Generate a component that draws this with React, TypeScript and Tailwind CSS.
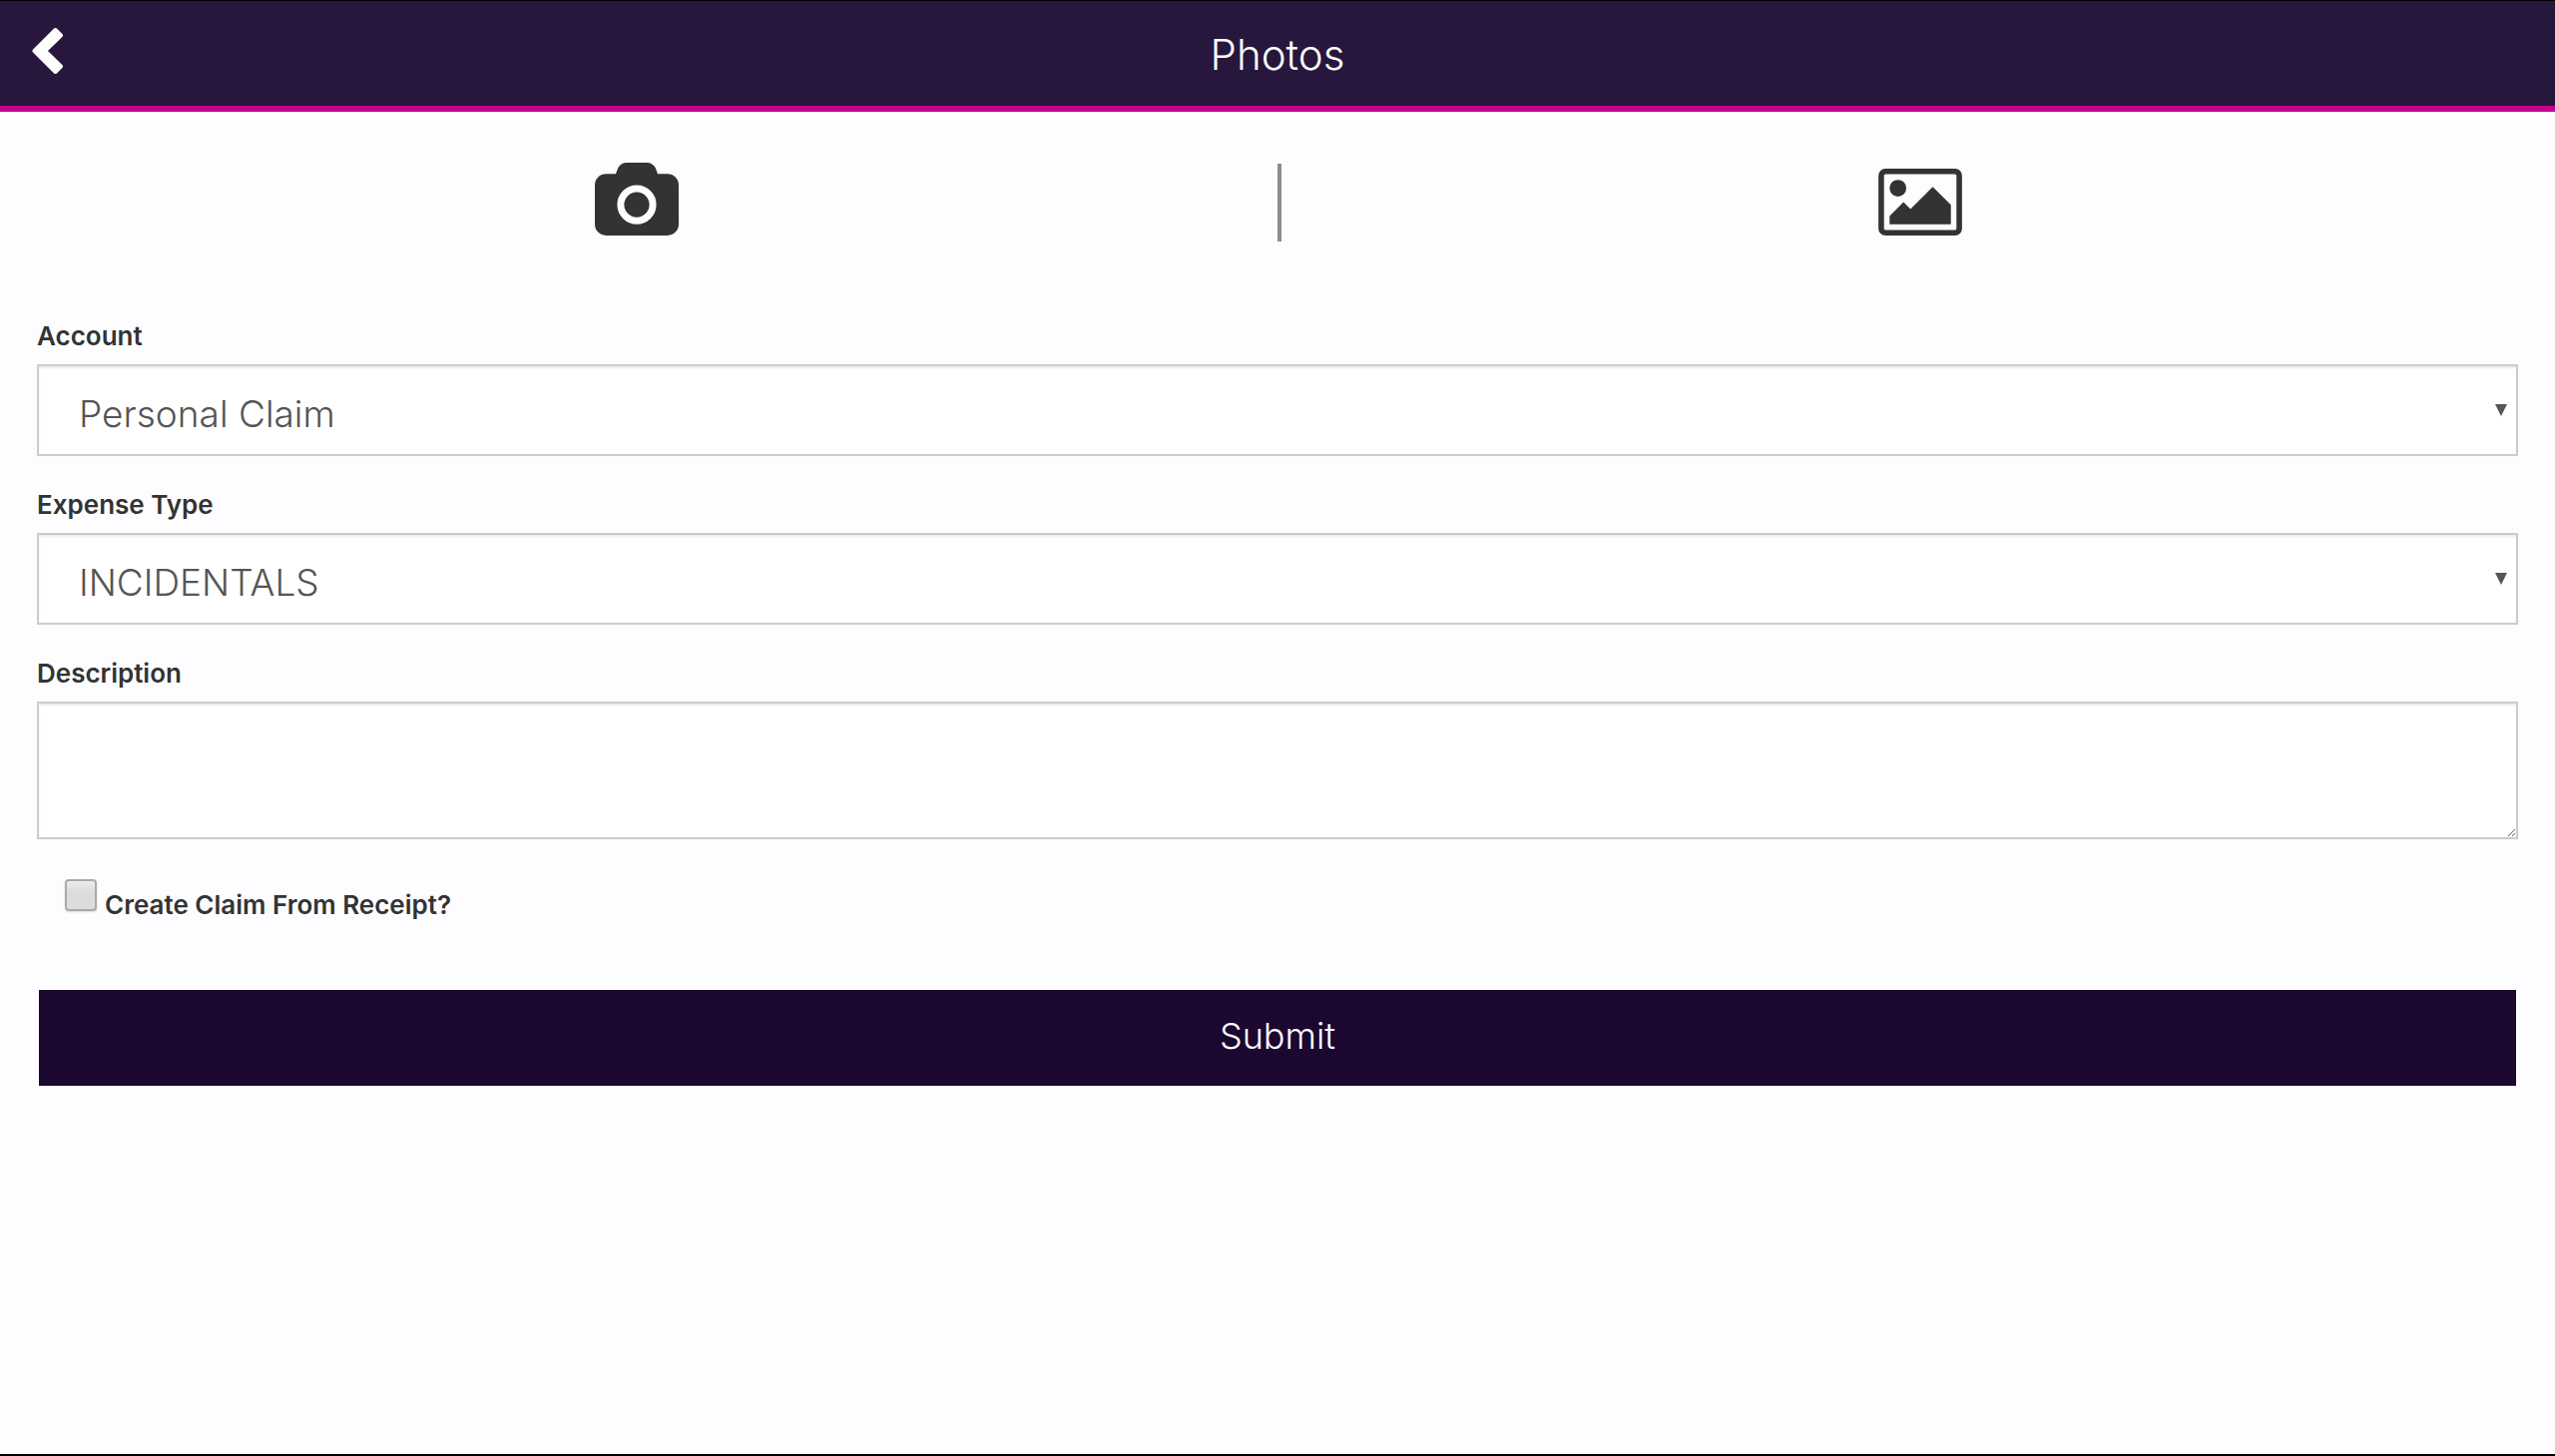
import React, { useState } from 'react';

const accounts = ['Personal Claim', 'Company Card'];
const expenseTypes = ['INCIDENTALS', 'MEALS', 'TRAVEL'];

interface SelectFieldProps {
  id: string;
  label: string;
  options: string[];
  value: string;
  onChange: (value: string) => void;
}

const labelClass = 'block text-[26px] leading-8 font-semibold text-[#333333]';
const fieldClass = 'block w-full border-2 border-[#cccccc] bg-white font-light text-[#555555] shadow-[inset_0_2px_2px_rgba(0,0,0,0.075)] outline-none focus:border-[#66afe9]';

const SelectField: React.FC<SelectFieldProps> = ({ id, label, options, value, onChange }) => (
  <div className="mb-[33px]">
    <label htmlFor={id} className={labelClass}>{label}</label>
    <div className="relative mt-3">
      <select
        id={id}
        value={value}
        onChange={e => onChange(e.target.value)}
        className={`${fieldClass} h-[92px] appearance-none rounded-none pt-2 pr-16 pl-10 text-[37px]`}
      >
        {options.map(o => <option key={o}>{o}</option>)}
      </select>
      <svg className="pointer-events-none absolute top-10 right-[11px] h-3 w-3" viewBox="0 0 12 12" fill="#555555"><path d="M0 0h12L6 12z" /></svg>
    </div>
  </div>
);

export default function App() {
  const [account, setAccount] = useState(accounts[0]);
  const [expenseType, setExpenseType] = useState(expenseTypes[0]);
  const [description, setDescription] = useState('');
  const [createClaim, setCreateClaim] = useState(false);

  return (
    <div className="flex min-h-screen flex-col border-b-2 border-black bg-[#fdfdff] font-['Inter',sans-serif]">
      {/* Header */}
      <header className="grid h-28 grid-cols-[1fr_auto_1fr] items-center border-t border-b-6 border-t-black border-b-[#c6008f] bg-[#28173d]">
        <button type="button" aria-label="Back" className="ml-8 w-8 pb-[6px]">
          <svg className="h-12 w-8" viewBox="0 0 32 48" fill="#ffffff" stroke="#ffffff" strokeWidth="4" strokeLinejoin="round">
            <path d="M2.5 24L23.5 3l5.500 5.500L13 24l16 15.500-5.500 5.500z" />
          </svg>
        </button>
        <h1 className="pt-[2px] text-[42px] leading-[48px] font-light text-white">Photos</h1>
      </header>

      {/* Photo sources */}
      <div className="flex h-[182px] items-center pb-[1px]">
        <div className="flex w-1/2 justify-center pr-1">
          <button type="button" aria-label="Take photo">
            <svg className="mb-[6px] h-[73px] w-[84px]" viewBox="0 0 1920 1664" fill="#333333">
              <path d="M960 672q119 0 203.5 84.500t84.500 203.500-84.500 203.500-203.500 84.500-203.500-84.500-84.500-203.500 84.500-203.500 203.500-84.500zM1664 256q106 0 181 75t75 181v896q0 106-75 181t-181 75h-1408q-106 0-181-75t-75-181v-896q0-106 75-181t181-75h224l51-136q19-49 69.500-84.500t103.500-35.500h512q53 0 103.500 35.500t69.500 84.500l51 136h224zM960 1408q185 0 316.500-131.500t131.500-316.500-131.500-316.500-316.500-131.500-316.500 131.500-131.500 316.500 131.500 316.500 316.500 131.500z" />
            </svg>
          </button>
        </div>
        <div className="h-[78px] w-1 bg-[#8c8c8c]" />
        <div className="flex flex-1 justify-center pl-1">
          <button type="button" aria-label="Choose from gallery">
            <svg className="h-[67px] w-[84px]" viewBox="0 128 1920 1536" fill="#333333">
              <path d="M640 576q0 80-56 136t-136 56-136-56-56-136 56-136 136-56 136 56 56 136zM1664 960v448h-1408v-192l320-320 160 160 512-512zM1760 256h-1600q-13 0-22.500 9.500t-9.500 22.500v1216q0 13 9.500 22.500t22.500 9.500h1600q13 0 22.500-9.500t9.500-22.500v-1216q0-13-9.500-22.500t-22.500-9.500zM1920 288v1216q0 66-47 113t-113 47h-1600q-66 0-113-47t-47-113v-1216q0-66 47-113t113-47h1600q66 0 113 47t47 113z" />
            </svg>
          </button>
        </div>
      </div>

      {/* Claim form */}
      <form className="px-[37px] pt-[27px]" onSubmit={e => e.preventDefault()}>
        <SelectField id="account" label="Account" options={accounts} value={account} onChange={setAccount} />
        <SelectField id="expense-type" label="Expense Type" options={expenseTypes} value={expenseType} onChange={setExpenseType} />

        <label htmlFor="description" className={labelClass}>Description</label>
        <textarea
          id="description"
          value={description}
          onChange={e => setDescription(e.target.value)}
          className={`${fieldClass} mt-3 h-[138px] px-10 py-3 text-[37px]`}
        />

        <div className="mt-10 flex items-start gap-2 pl-7">
          <input
            id="create-claim"
            type="checkbox"
            checked={createClaim}
            onChange={e => setCreateClaim(e.target.checked)}
            className="h-8 w-8 appearance-none rounded-[4px] border-2 border-[#aaaaaa] bg-linear-to-b from-[#ededed] to-[#dcdcdc] to-40% shadow-[0_1px_2px_rgba(0,0,0,0.15)] checked:from-[#8c8c8c] checked:to-[#555555]"
          />
          <label htmlFor="create-claim" className={`${labelClass} pt-[10px]`}>Create Claim From Receipt?</label>
        </div>

        <div className="mx-[2px] mt-[69px]">
          <button type="submit" className="block h-24 w-full bg-[#1b0730] pb-1 text-[36px] font-light text-white">Submit</button>
        </div>
      </form>
    </div>
  );
}
